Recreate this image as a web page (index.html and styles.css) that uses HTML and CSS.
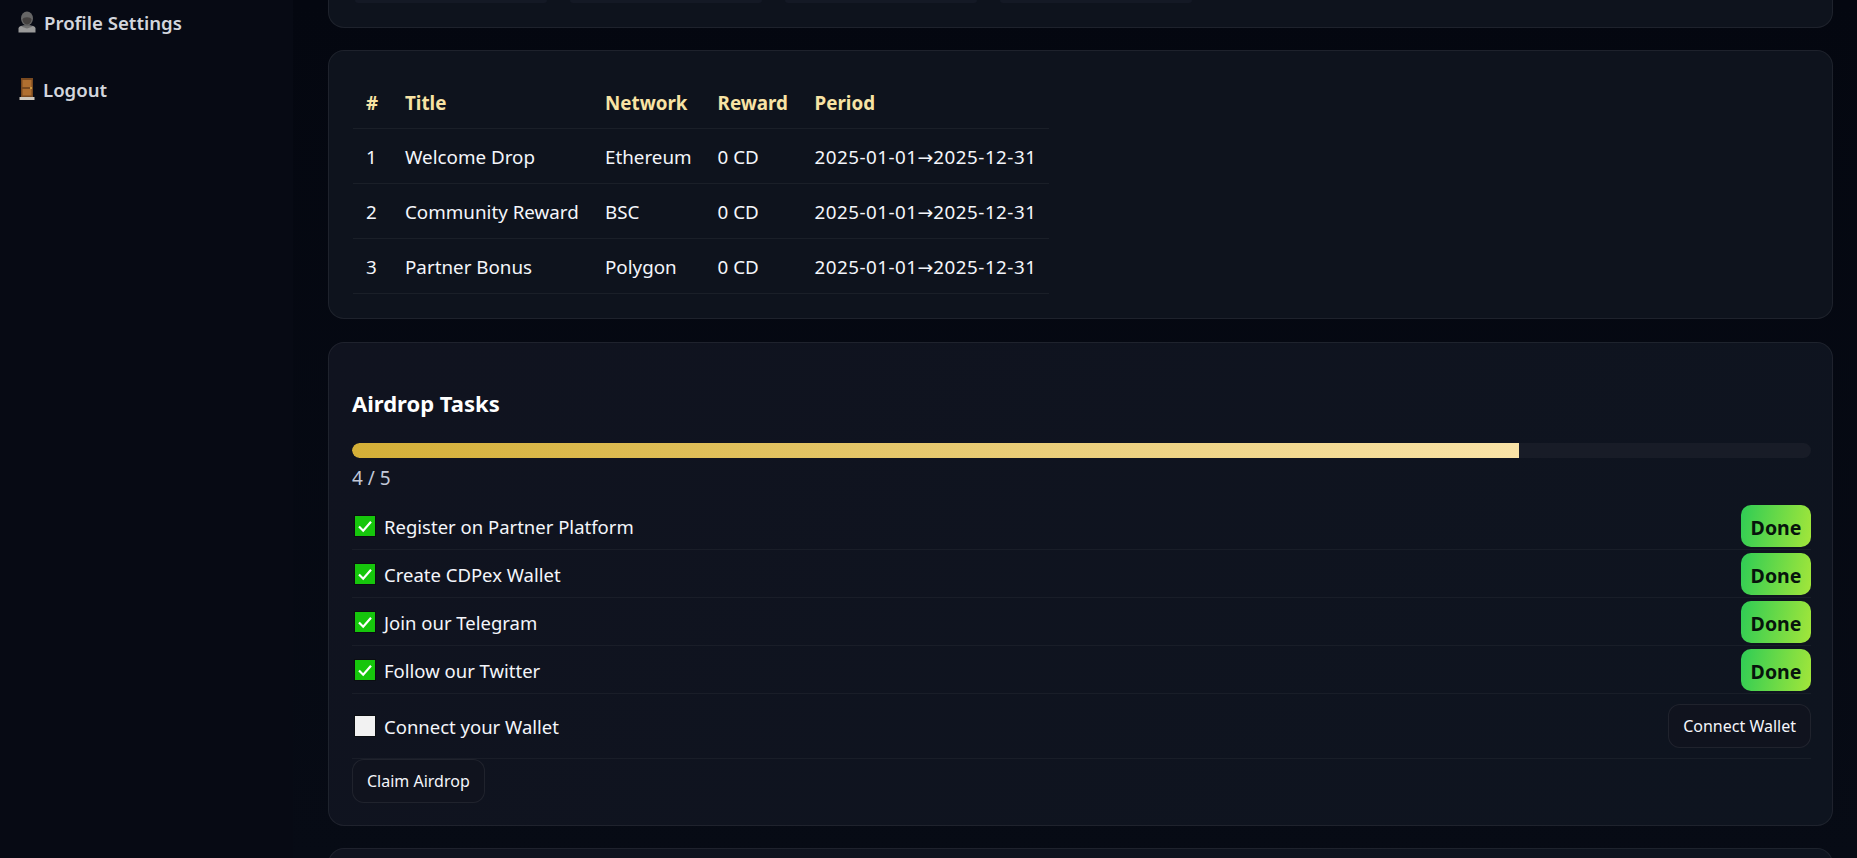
FILE: index.html
```html
<!DOCTYPE html>
<html lang="en">
<head>
<meta charset="utf-8">
<title>Airdrop</title>
<link rel="stylesheet" href="styles.css">
</head>
<body>
<div class="app">
  <aside class="sidebar">
    <a class="nav-link nav-profile">
      <svg class="nav-icon" viewBox="0 0 18 22" width="18" height="22" aria-hidden="true">
        <path d="M0.500 21.500 V17.500 C0.500 15 4 14.500 9 14.500 C14 14.500 17.500 15 17.500 17.500 V21.500 Z" fill="#9a9a9a"/>
        <path d="M3 15.500 C6 14 12 14 15 15.500 L9 17.500 Z" fill="#6f6f6f"/>
        <ellipse cx="9" cy="7.500" rx="6" ry="7" fill="#666"/>
        <path d="M4.500 8.500 C5 5.500 13 5.500 13.500 8.500 C13 12 11 13.500 9 13.500 C7 13.500 5 12 4.500 8.500 Z" fill="#444140"/>
      </svg>
      Profile Settings
    </a>
    <a class="nav-link nav-logout">
      <svg class="nav-icon" viewBox="0 0 16 22" width="16" height="22" aria-hidden="true">
        <rect x="0.500" y="19" width="15" height="3" fill="#cfc8be"/>
        <rect x="2" y="0" width="12" height="19" fill="#7a4a20"/>
        <rect x="3.500" y="2" width="9" height="7" fill="#b06f30"/>
        <rect x="3.500" y="11" width="9" height="6.500" fill="#b06f30"/>
        <circle cx="12" cy="10" r="1" fill="#e8b64a"/>
      </svg>
      Logout
    </a>
  </aside>
  <main class="content">
    <section class="card card-top">
      <div class="pills">
        <span class="pill"></span><span class="pill"></span><span class="pill"></span><span class="pill"></span>
      </div>
    </section>
    <section class="card card-table">
      <table class="drops">
        <thead>
          <tr><th class="c-num">#</th><th class="c-title">Title</th><th class="c-net">Network</th><th class="c-rew">Reward</th><th>Period</th></tr>
        </thead>
        <tbody>
          <tr><td>1</td><td>Welcome Drop</td><td>Ethereum</td><td>0 CD</td><td class="period">2025-01-01<span class="arrow">→</span>2025-12-31</td></tr>
          <tr><td>2</td><td>Community Reward</td><td>BSC</td><td>0 CD</td><td class="period">2025-01-01<span class="arrow">→</span>2025-12-31</td></tr>
          <tr><td>3</td><td>Partner Bonus</td><td>Polygon</td><td>0 CD</td><td class="period">2025-01-01<span class="arrow">→</span>2025-12-31</td></tr>
        </tbody>
      </table>
    </section>
    <section class="card card-tasks">
      <h2 class="tasks-title">Airdrop Tasks</h2>
      <div class="progress"><div class="progress-fill"></div></div>
      <div class="progress-label">4 / 5</div>
      <ul class="tasks">
        <li class="task">
          <span class="task-label"><svg class="check" viewBox="0 0 22 22" width="22" height="22" aria-hidden="true"><rect width="22" height="22" fill="#0b0e12"/><rect x="1" y="1" width="20" height="20" fill="#16c60c"/><path d="M5 11.500 L9.200 15.700 L17 6.800" fill="none" stroke="#fff" stroke-width="2.200"/></svg>Register on Partner Platform</span>
          <button class="btn-done">Done</button>
        </li>
        <li class="task">
          <span class="task-label"><svg class="check" viewBox="0 0 22 22" width="22" height="22" aria-hidden="true"><rect width="22" height="22" fill="#0b0e12"/><rect x="1" y="1" width="20" height="20" fill="#16c60c"/><path d="M5 11.500 L9.200 15.700 L17 6.800" fill="none" stroke="#fff" stroke-width="2.200"/></svg>Create CDPex Wallet</span>
          <button class="btn-done">Done</button>
        </li>
        <li class="task">
          <span class="task-label"><svg class="check" viewBox="0 0 22 22" width="22" height="22" aria-hidden="true"><rect width="22" height="22" fill="#0b0e12"/><rect x="1" y="1" width="20" height="20" fill="#16c60c"/><path d="M5 11.500 L9.200 15.700 L17 6.800" fill="none" stroke="#fff" stroke-width="2.200"/></svg>Join our Telegram</span>
          <button class="btn-done">Done</button>
        </li>
        <li class="task">
          <span class="task-label"><svg class="check" viewBox="0 0 22 22" width="22" height="22" aria-hidden="true"><rect width="22" height="22" fill="#0b0e12"/><rect x="1" y="1" width="20" height="20" fill="#16c60c"/><path d="M5 11.500 L9.200 15.700 L17 6.800" fill="none" stroke="#fff" stroke-width="2.200"/></svg>Follow our Twitter</span>
          <button class="btn-done">Done</button>
        </li>
        <li class="task task-open">
          <span class="task-label"><svg class="check" viewBox="0 0 22 22" width="22" height="22" aria-hidden="true"><rect width="22" height="22" fill="#0b0e12"/><rect x="1" y="1" width="20" height="20" fill="#f2f2f2"/></svg>Connect your Wallet</span>
          <button class="btn-ghost">Connect Wallet</button>
        </li>
      </ul>
      <button class="btn-ghost">Claim Airdrop</button>
    </section>
    <section class="card card-next"></section>
  </main>
</div>
</body>
</html>
```
FILE: styles.css
```css
* { box-sizing: border-box; }
html, body { margin: 0; height: 858px; overflow: hidden; background: #04080f; }
body { font-family: "Noto Sans", "Open Sans", sans-serif; color: #f4f6fb; font-size: 18.500px; }
.app { display: flex; height: 858px; }
.sidebar { width: 293px; flex: none; background: #070a14; padding: 9px 0 0 18px; }
.nav-link { display: flex; align-items: center; color: #d3d6dd; font-weight: 600; font-size: 18.600px; height: 26px; }
.nav-icon { flex: none; margin-right: 8px; }
.nav-logout { margin-top: 41px; }
.nav-logout .nav-icon { margin-left: 1px; }
.content { flex: 1; min-width: 0; padding: 0 24px 0 35px; background: linear-gradient(180deg, #040710 0%, #070b15 100%); display: flex; flex-direction: column; gap: 22px; }
.card { border: 1px solid rgba(255,255,255,.065); border-radius: 16px; background: linear-gradient(135deg, #10131f 0%, #0e141f 100%); flex: none; }
.card-top { height: 28px; border-top: 0; border-radius: 0 0 16px 16px; padding: 0 26px; background: #0e131d; }
.pills { display: flex; gap: 23px; }
.pill { width: 192px; height: 3px; background: #141925; border-radius: 0 0 8px 8px; }
.card-table { height: 269px; padding: 24px; background: #0e131d; }
.drops { border-collapse: collapse; }
.drops th { color: #f8e3a4; font-size: 18.800px; font-weight: 700; text-align: left; height: 53px; padding: 4px 13px 0; border-bottom: 1px solid rgba(255,255,255,.05); }
.drops td { height: 55px; padding: 3px 13px 0; border-bottom: 1px solid rgba(255,255,255,.05); color: #f4f6fb; white-space: nowrap; font-size: 18.800px; }
.drops .period { letter-spacing: .5px; }
.arrow { font-family: "DejaVu Sans", sans-serif; letter-spacing: 0; }
.c-num { width: 39px; }
.c-title { width: 200px; }
.c-net { width: 111px; }
.c-rew { width: 97px; }
.card-tasks { height: 484px; margin-top: 1px; padding: 41px 21px 22px 23px; }
.tasks-title { margin: 0 0 21px; font-size: 22px; font-weight: 700; line-height: 38px; color: #fff; }
.progress { height: 15px; border-radius: 8px; background: #181c27; overflow: hidden; }
.progress-fill { width: 80%; height: 100%; background: linear-gradient(90deg, #d4af37 0%, #f9e3a7 100%); border-radius: 8px 0 0 8px; }
.progress-label { height: 40px; line-height: 40px; color: #c2c8d8; font-size: 19px; }
.tasks { list-style: none; margin: 4px 0 0; padding: 0; }
.task { display: flex; align-items: center; justify-content: space-between; height: 48px; padding: 3px 0 2px; border-bottom: 1px solid rgba(255,255,255,.045); }
.task-open { height: 65px; padding: 10px 0; }
.task-label { display: flex; align-items: center; padding-left: 2px; }
.check { flex: none; margin-right: 8px; }
.btn-done { width: 70px; height: 42px; padding: 2px 0 0; border: 0; border-radius: 10px; font-family: inherit; font-size: 19.500px; font-weight: 700; color: #07140c; background: linear-gradient(100deg, #2ecc55 0%, #a3e63a 100%); }
.btn-ghost { height: 44px; padding: 0 14px; border: 1px solid rgba(255,255,255,.07); border-radius: 12px; background: #10131e; color: #f4f6fb; font-family: inherit; font-size: 16px; }
.card-next { height: 40px; }
```
